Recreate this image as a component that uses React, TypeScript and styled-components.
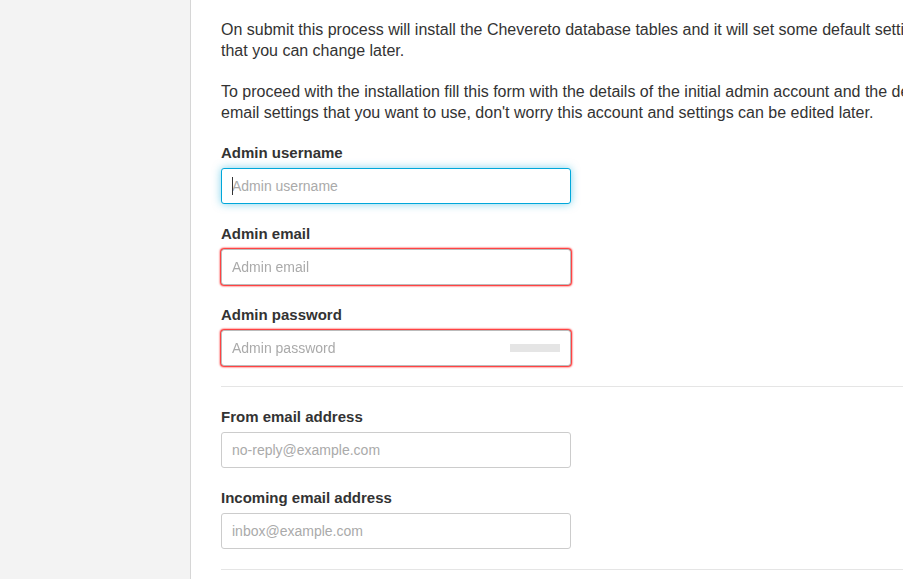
import React, { useId } from "react";
import styled, { createGlobalStyle, css } from "styled-components";

const GlobalStyle = createGlobalStyle`
  *, *::before, *::after { box-sizing: border-box; }
  html, body { margin: 0; overflow-x: hidden; }
  body {
    background: #f3f3f3;
    color: #333;
    font-family: "Liberation Sans", Arial, sans-serif;
    font-size: 16px;
    line-height: 21px;
  }
`;

const Page = styled.div`
  height: 100vh;
  overflow: hidden;
  padding-left: 190px;
`;

const Panel = styled.main`
  width: 788px;
  min-height: 100%;
  padding: 19px 30px;
  background: #fff;
  border-left: 1px solid #d6d6d6;
`;

const Paragraph = styled.p`
  margin: 0 0 20px;
`;

const FieldSet = styled.div`
  display: flex;
  flex-direction: column;
  gap: 20px;
`;

const Field = styled.div`
  max-width: 350px;
`;

const Label = styled.label`
  display: block;
  height: 25px;
  line-height: 20px;
  font-size: 15px;
  font-weight: bold;
`;

const InputWrap = styled.div`
  position: relative;
`;

type Status = "focus" | "invalid" | "normal";

const statusStyles = {
  normal: css`
    border-color: #ccc;
  `,
  focus: css`
    border-color: #00a7da;
    box-shadow: 0 0 8px rgba(0, 167, 218, 0.5);
  `,
  invalid: css`
    border-color: #bbb;
    box-shadow: 0 0 2px 1px #f00;
  `,
};

const Input = styled.input<{ $status: Status }>`
  display: block;
  width: 100%;
  height: 36px;
  padding: 0 10px;
  border: 1px solid;
  border-radius: 3px;
  outline: none;
  background: #fff;
  color: #333;
  caret-color: transparent;
  font: 14px "Liberation Sans", Arial, sans-serif;
  ${({ $status }) => statusStyles[$status]}

  &::placeholder {
    color: #aaa;
  }
`;

const Caret = styled.span`
  position: absolute;
  top: 9px;
  left: 11px;
  width: 1px;
  height: 18px;
  background: #333;
`;

const StrengthMeter = styled.span`
  position: absolute;
  top: 14px;
  right: 11px;
  width: 50px;
  height: 8px;
  background: #e5e5e5;
`;

const Divider = styled.hr`
  height: 1px;
  margin: 20px 0;
  border: 0;
  background: #e5e5e5;
`;

interface TextFieldProps {
  label: string;
  type?: string;
  placeholder?: string;
  status?: Status;
  meter?: boolean;
}

function TextField({ label, type = "text", placeholder = label, status = "normal", meter }: TextFieldProps) {
  const id = useId();
  const focused = status === "focus";
  return (
    <Field>
      <Label htmlFor={id}>{label}</Label>
      <InputWrap>
        <Input id={id} type={type} placeholder={placeholder} autoFocus={focused} $status={status} />
        {focused && <Caret />}
        {meter && <StrengthMeter />}
      </InputWrap>
    </Field>
  );
}

export default function App() {
  return (
    <Page>
      <GlobalStyle />
      <Panel>
        <Paragraph>
          On submit this process will install the Chevereto database tables and it will set some default settings that
          you can change later.
        </Paragraph>
        <Paragraph>
          To proceed with the installation fill this form with the details of the initial admin account and the default
          email settings that you want to use, don't worry this account and settings can be edited later.
        </Paragraph>
        <form>
          <FieldSet>
            <TextField label="Admin username" status="focus" />
            <TextField label="Admin email" type="email" status="invalid" />
            <TextField label="Admin password" type="password" status="invalid" meter />
          </FieldSet>
          <Divider />
          <FieldSet>
            <TextField label="From email address" type="email" placeholder="no-reply@example.com" />
            <TextField label="Incoming email address" type="email" placeholder="inbox@example.com" />
          </FieldSet>
          <Divider />
        </form>
      </Panel>
    </Page>
  );
}
